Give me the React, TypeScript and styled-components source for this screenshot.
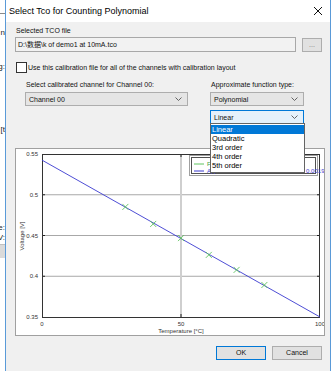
import styled, { createGlobalStyle } from "styled-components";

const GlobalStyle = createGlobalStyle`
  html, body {
    margin: 0;
    padding: 0;
    background: #fff;
  }
  body {
    font-family: "Liberation Sans", "Noto Sans CJK SC", sans-serif;
    color: #000;
  }
`;

// chart geometry (svg coords, inside the white panel)
const X0 = 26;
const X1 = 304;
const Y0 = 168;
const Y1 = 5;
const tx = (t: number) => X0 + (t / 100) * (X1 - X0);
const vy = (v: number) => Y0 - ((v - 0.35) / 0.2) * (Y0 - Y1);
const fit = (t: number) => 0.5425 - 0.001925 * t;

const points = [
  [30, 0.4851],
  [40, 0.4642],
  [50, 0.4468],
  [60, 0.4262],
  [70, 0.4078],
  [80, 0.3893],
];

const options = ["Linear", "Quadratic", "3rd order", "4th order", "5th order"];

const backTexts = [
  { top: 14, text: "n" },
  { top: 24, text: "g:" },
  { top: 53, text: "[t" },
  { top: 88, text: "e:" },
  { top: 0, text: "V:" },
];

export default function App() {
  return (
    <>
      <GlobalStyle />
      <Page>
        <Backdrop>
          <BackRule $top={13} />
          {backTexts.map((b) => (
            <BackText key={b.text} $top={b.top}>
              <span>{b.text}</span>
            </BackText>
          ))}
          <BackBar $top={1} />
        </Backdrop>

        <Dialog>
          <TitleBar>
            <Title>Select Tco for Counting Polynomial</Title>
            <svg width="10" height="10" viewBox="0 0 10 10">
              <path d="M1 1 L9 9 M9 1 L1 9" stroke="#111" strokeWidth="1" />
            </svg>
          </TitleBar>

          <Body>
            <Label>Selected TCO file</Label>
            <FileRow>
              <TextBox>D:\数据\k of demo1 at 10mA.tco</TextBox>
              <SmallButton>...</SmallButton>
            </FileRow>

            <CheckRow>
              <CheckBox />
              <span>Use this calibration file for all of the channels with calibration layout</span>
            </CheckRow>

            <ComboGrid>
              <Label>Select calibrated channel for Channel 00:</Label>
              <Label>Approximate function type:</Label>
              <Combo>
                <span>Channel 00</span>
                <Chevron />
              </Combo>
              <Combo>
                <span>Polynomial</span>
                <Chevron />
              </Combo>
              <div />
              <DropWrap>
                <Combo $open>
                  <span>Linear</span>
                  <Chevron />
                </Combo>
                <DropList>
                  {options.map((o, i) => (
                    <DropItem key={o} $selected={i === 0}>
                      {o}
                    </DropItem>
                  ))}
                </DropList>
              </DropWrap>
            </ComboGrid>

            <ChartPanel>
              <svg width="308" height="186" viewBox="0 0 308 186">
                {[0.5, 0.45, 0.4].map((v) => (
                  <g key={v}>
                    <line x1={X0} x2={X1} y1={vy(v)} y2={vy(v)} stroke="#a8a8a8" />
                    <line x1={X0} x2={X0 + 3} y1={vy(v)} y2={vy(v)} stroke="#222" />
                    <line x1={X1 - 3} x2={X1} y1={vy(v)} y2={vy(v)} stroke="#222" />
                  </g>
                ))}
                <line x1={tx(50)} x2={tx(50)} y1={Y1} y2={Y0} stroke="#cfcfcf" strokeWidth="2" />
                <line x1={tx(50)} x2={tx(50)} y1={Y1} y2={Y1 + 3} stroke="#222" />
                <line x1={tx(50)} x2={tx(50)} y1={Y0 - 3} y2={Y0} stroke="#222" />
                <rect x={X0 + 0.5} y={Y1 + 0.5} width={X1 - X0 - 1} height={Y0 - Y1} fill="none" stroke="#333" />

                <line x1={tx(0)} y1={vy(fit(0))} x2={tx(100)} y2={vy(fit(100))} stroke="#3a3ad0" strokeWidth="0.9" />
                {points.map(([t, v]) => (
                  <path
                    key={t}
                    d={`M${tx(t) - 3} ${vy(v) - 3} L${tx(t) + 3} ${vy(v) + 3} M${tx(t) + 3} ${vy(v) - 3} L${tx(t) - 3} ${vy(v) + 3}`}
                    stroke="#5fc45f"
                    strokeWidth="0.9"
                  />
                ))}

                <g fontFamily="Liberation Sans, sans-serif" fontSize="6" fill="#333">
                  {[0.55, 0.5, 0.45, 0.4, 0.35].map((v) => (
                    <text key={v} x={X0 - 4} y={vy(v) + 2} textAnchor="end">
                      {String(v)}
                    </text>
                  ))}
                  {[0, 50, 100].map((t) => (
                    <text key={t} x={tx(t)} y={177} textAnchor="middle">
                      {t}
                    </text>
                  ))}
                  <text x={tx(50)} y={184} textAnchor="middle">
                    Temperature [°C]
                  </text>
                  <text x={8} y={87} textAnchor="middle" transform="rotate(-90 8 87)">
                    Voltage [V]
                  </text>
                </g>

                <rect x="173.5" y="6.5" width="128" height="20" fill="#fff" stroke="#a0a0a0" />
                <rect x="175.5" y="8.5" width="124" height="16" fill="none" stroke="#505050" />
                <line x1="178" x2="188" y1="15" y2="15" stroke="#5fc45f" />
                <line x1="178" x2="188" y1="22" y2="22" stroke="#3a3ad0" />
                <g fontFamily="Liberation Sans, sans-serif" fontSize="6">
                  <text x="191" y="17" fill="#3a9a3a">Fitted data</text>
                  <text x="191" y="24" fill="#3a3ad0">Approximate function n: P = 0.5425 - 0.0019·T2</text>
                </g>
              </svg>
            </ChartPanel>

            <ButtonRow>
              <DialogButton $default>OK</DialogButton>
              <DialogButton>Cancel</DialogButton>
            </ButtonRow>
          </Body>
        </Dialog>

        <Backdrop />
      </Page>
    </>
  );
}

function Chevron() {
  return (
    <svg width="7" height="4" viewBox="0 0 7 4">
      <polyline points="0.5,0.5 3.5,3.5 6.5,0.5" fill="none" stroke="#555" strokeWidth="0.9" />
    </svg>
  );
}

const Page = styled.div`
  width: 336px;
  height: 371px;
  display: flex;
  overflow: hidden;
  background: #fff;
`;

const Backdrop = styled.div`
  width: 5px;
  flex: none;
  display: flex;
  flex-direction: column;
  overflow: hidden;
  background: #fff;
`;

const BackRule = styled.div<{ $top: number }>`
  margin-top: ${(p) => p.$top}px;
  height: 1px;
  background: #8a8a8a;
  flex: none;
`;

const BackText = styled.div<{ $top: number }>`
  margin-top: ${(p) => p.$top}px;
  height: 10px;
  flex: none;
  display: flex;
  justify-content: flex-end;
  font-size: 8px;
  line-height: 10px;
  white-space: nowrap;
  color: #222;
`;

const BackBar = styled.div<{ $top: number }>`
  margin-top: ${(p) => p.$top}px;
  height: 13px;
  flex: none;
  background: #dadada;
  border-top: 1px solid #c0c0c0;
`;

const Dialog = styled.div`
  width: 326px;
  flex: none;
  box-sizing: border-box;
  border-left: 1px solid #5a9ad8;
  border-right: 1px solid #5a9ad8;
  display: flex;
  flex-direction: column;
  background: #f0f0f0;
`;

const TitleBar = styled.div`
  height: 22px;
  flex: none;
  background: #fff;
  display: flex;
  align-items: center;
  justify-content: space-between;
  padding: 0 7px 0 3px;
`;

const Title = styled.div`
  font-size: 9px;
  color: #000;
`;

const Body = styled.div`
  flex: 1;
  display: flex;
  flex-direction: column;
  padding: 4px 5px 0 9px;
  font-size: 7px;
  color: #111;
`;

const Label = styled.div`
  height: 10px;
  line-height: 10px;
  padding-left: 1px;
  white-space: nowrap;
`;

const FileRow = styled.div`
  margin-top: 1px;
  display: flex;
  gap: 6px;
  height: 15px;
`;

const TextBox = styled.div`
  width: 281px;
  box-sizing: border-box;
  border: 1px solid #a8a8a8;
  background: #f2f2f2;
  padding-left: 2px;
  line-height: 13px;
  white-space: nowrap;
`;

const SmallButton = styled.div`
  margin-top: 1px;
  width: 20px;
  height: 14px;
  box-sizing: border-box;
  border: 1px solid #adadad;
  background: #e1e1e1;
  color: #777;
  text-align: center;
  line-height: 11px;
`;

const CheckRow = styled.div`
  margin-top: 10px;
  height: 11px;
  display: flex;
  align-items: center;
  gap: 1px;
  padding-left: 1px;
  white-space: nowrap;
`;

const CheckBox = styled.div`
  width: 11px;
  height: 11px;
  box-sizing: border-box;
  border: 1px solid #333;
  background: #fff;
`;

const ComboGrid = styled.div`
  margin-top: 7px;
  display: grid;
  grid-template-columns: 163px 94px;
  grid-auto-rows: auto;
  column-gap: 22px;
  padding-left: 10px;
  & > :nth-child(3),
  & > :nth-child(4) {
    margin-top: 2px;
  }
  & > :nth-child(5),
  & > :nth-child(6) {
    margin-top: 4px;
  }
`;

const Combo = styled.div<{ $open?: boolean }>`
  height: 14px;
  box-sizing: border-box;
  border: 1px solid ${(p) => (p.$open ? "#0078d7" : "#adadad")};
  background: ${(p) => (p.$open ? "#e5f1fb" : "#e5e5e5")};
  display: flex;
  align-items: center;
  justify-content: space-between;
  padding: 0 5px 0 3px;
`;

const DropWrap = styled.div`
  position: relative;
`;

const DropList = styled.div`
  position: absolute;
  top: 13px;
  left: 0;
  width: 95px;
  box-sizing: border-box;
  border: 1px solid #646464;
  background: #fff;
  padding: 1px 0 2px;
  z-index: 2;
`;

const DropItem = styled.div<{ $selected?: boolean }>`
  height: 9px;
  line-height: 9px;
  padding-left: 1px;
  font-size: 7.5px;
  background: ${(p) => (p.$selected ? "#0078d7" : "transparent")};
  color: ${(p) => (p.$selected ? "#fff" : "#000")};
`;

const ChartPanel = styled.div`
  margin-top: 24px;
  width: 310px;
  height: 188px;
  box-sizing: border-box;
  border: 1px solid #a0a0a0;
  background: #fff;
  & > svg {
    display: block;
  }
`;

const ButtonRow = styled.div`
  margin-top: 10px;
  display: flex;
  justify-content: flex-end;
  gap: 6px;
  padding-right: 3px;
`;

const DialogButton = styled.div<{ $default?: boolean }>`
  width: 50px;
  height: 14px;
  box-sizing: border-box;
  border: 1px solid ${(p) => (p.$default ? "#0078d7" : "#adadad")};
  background: #e1e1e1;
  text-align: center;
  line-height: 12px;
`;
